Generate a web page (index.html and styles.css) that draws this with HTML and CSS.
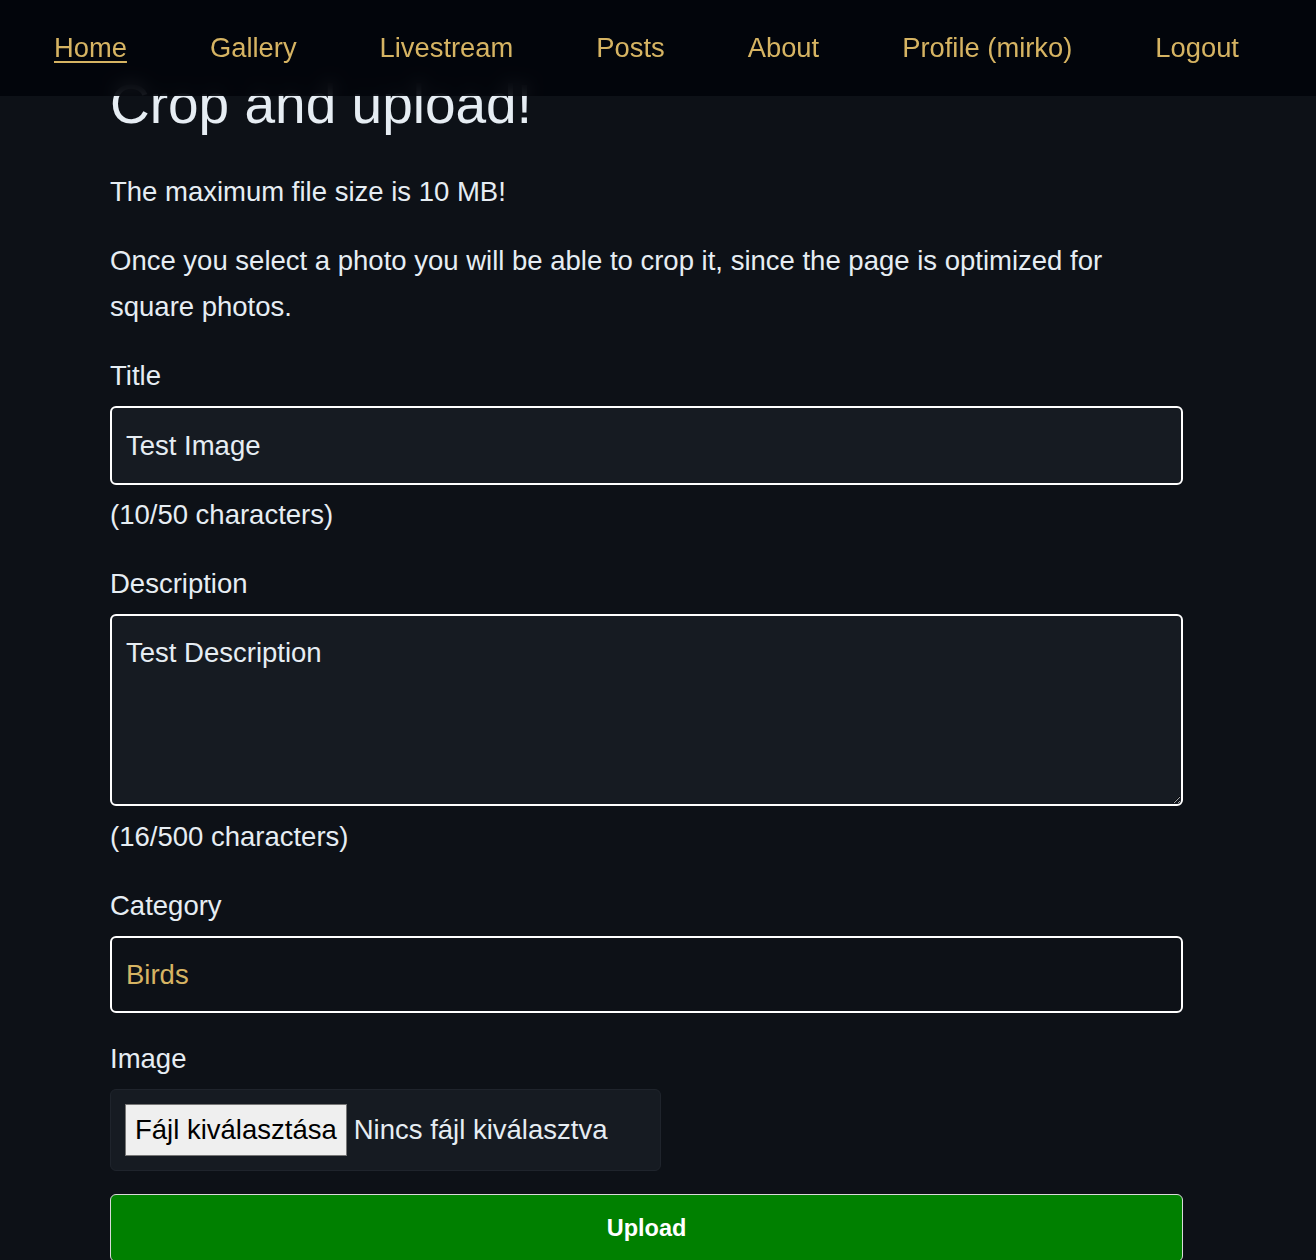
FILE: index.html
```html
<!DOCTYPE html>
<html lang="en">
<head>
<meta charset="utf-8">
<title>Crop and upload</title>
<link rel="stylesheet" href="styles.css">
</head>
<body>
<header class="topbar">
  <nav class="nav">
    <a class="nav-link current" href="#">Home</a>
    <a class="nav-link" href="#">Gallery</a>
    <a class="nav-link" href="#">Livestream</a>
    <a class="nav-link" href="#">Posts</a>
    <a class="nav-link" href="#">About</a>
    <a class="nav-link" href="#">Profile (mirko)</a>
    <a class="nav-link" href="#">Logout</a>
  </nav>
</header>
<main class="page">
  <h1 class="title">Crop and upload!</h1>
  <p class="note">The maximum file size is 10 MB!</p>
  <p class="note">Once you select a photo you will be able to crop it, since the page is optimized for square photos.</p>
  <form class="form">
    <div class="field">
      <label class="label" for="t">Title</label>
      <input class="control" id="t" type="text" value="Test Image">
      <span class="count">(10/50 characters)</span>
    </div>
    <div class="field">
      <label class="label" for="d">Description</label>
      <textarea class="control area" id="d">Test Description</textarea>
      <span class="count">(16/500 characters)</span>
    </div>
    <div class="field">
      <label class="label" for="c">Category</label>
      <select class="control select" id="c"><option>Birds</option></select>
    </div>
    <div class="field">
      <span class="label">Image</span>
      <div class="file">
        <span class="file-btn">Fájl kiválasztása</span>
        <span class="file-name">Nincs fájl kiválasztva</span>
      </div>
    </div>
    <button class="upload" type="button">Upload</button>
  </form>
</main>
</body>
</html>
```
FILE: styles.css
```css
* { box-sizing: border-box; }
html, body { margin: 0; }
body {
  background: #0d1117;
  color: #e6edf3;
  font-family: "Liberation Sans", Arial, sans-serif;
  font-size: 27.5px;
  line-height: 46px;
}
.topbar {
  position: fixed;
  top: 0; left: 0; right: 0;
  height: 96px;
  background: rgba(1, 4, 9, 0.86);
  backdrop-filter: blur(8px);
  z-index: 10;
}
.nav {
  display: flex;
  align-items: center;
  height: 96px;
  padding-left: 54px;
  gap: 83px;
  font-size: 27.35px;
}
.nav-link {
  color: #d6b463;
  text-decoration: none;
  line-height: 1;
}
.nav-link.current { text-decoration: underline; text-underline-offset: 4px; }
.page {
  width: 1073px;
  margin-left: 110px;
  padding-top: 73px;
}
.title {
  margin: 0;
  font-size: 55px;
  font-weight: normal;
  line-height: 62px;
}
.note { margin: 0; }
.title + .note { margin-top: 34px; }
.note + .note { margin-top: 23px; }
.form {
  display: flex;
  flex-direction: column;
  gap: 23px;
  margin-top: 23px;
  padding-bottom: 40px;
}
.field {
  display: flex;
  flex-direction: column;
  gap: 7px;
}
.label { display: block; }
.control {
  font-family: inherit;
  font-size: 27.5px;
  line-height: 46px;
  color: #e6edf3;
  background: #161b22;
  border: 2px solid #ffffff;
  border-radius: 6px;
  padding: 14.5px 14px;
  width: 100%;
  outline: none;
  margin: 0;
}
.area { height: 192px; resize: vertical; padding-top: 14px; }
.area + .count { margin-top: 1px; }
.select {
  appearance: none;
  -webkit-appearance: none;
  background: #0d1117;
  color: #d6b463;
  height: 77px;
  padding-top: 0;
  padding-bottom: 0;
}
.file {
  display: flex;
  align-items: center;
  gap: 7px;
  width: 551px;
  height: 82px;
  padding: 0 14px;
  background: #161b22;
  border: 1px solid #1f242c;
  border-radius: 6px;
}
.file-btn {
  background: #efefef;
  color: #000;
  border: 1px solid #767676;
  height: 52px;
  line-height: 50px;
  padding: 0 9px;
}
.file-name { color: #e6edf3; line-height: 1; }
.upload {
  height: 68px;
  background: #008000;
  color: #fff;
  border: 1px solid #d9d9d9;
  border-radius: 6px;
  font-family: inherit;
  font-weight: bold;
  font-size: 23.5px;
  margin-top: 0;
}
```
